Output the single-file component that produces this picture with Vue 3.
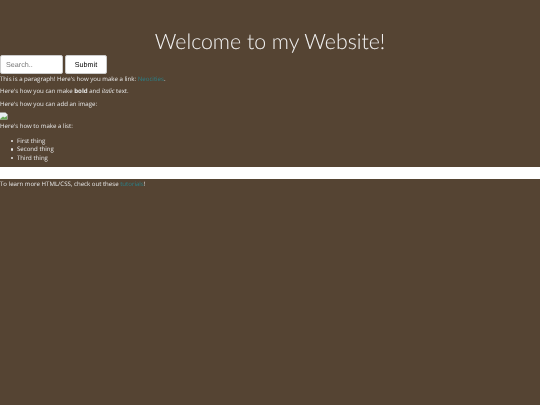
<template>
  <div class="page">
    <h1 class="title">Welcome to my Website!</h1>
    <form class="search" @submit.prevent>
      <input class="search-input" type="text" placeholder="Search.." />
      <button class="search-btn" type="submit">Submit</button>
    </form>
    <p class="first">This is a paragraph! Here's how you make a link: <a href="#">Neocities</a>.</p>
    <p>Here's how you can make <strong>bold</strong> and <em>italic</em> text.</p>
    <p>Here's how you can add an image:</p>
    <svg class="broken" width="8" height="8" viewBox="0 0 8 8">
      <path d="M0 0.5H5.5L7.5 2.5V7.5H0Z" fill="#e8eef2" />
      <path d="M0.5 6.5L3 4.5L4.5 5.5L7 4V7.5H0.5Z" fill="#6aa85a" />
    </svg>
    <p class="after-img">Here's how to make a list:</p>
    <ul class="list">
      <li v-for="item in items" :key="item">{{ item }}</li>
    </ul>
    <div class="bar"></div>
    <p class="last">To learn more HTML/CSS, check out these <a href="#">tutorials</a>!</p>
  </div>
</template>

<script setup>
const items = ['First thing', 'Second thing', 'Third thing']
</script>

<style>
html, body {
  background: #554433;
}
</style>

<style scoped>
.page {
  min-height: 405px;
  color: #e6e6e6;
  font-family: 'Open Sans', sans-serif;
  font-size: 6.1px;
  line-height: 8.5px;
  text-rendering: geometricPrecision;
  will-change: transform;
}
.title {
  margin: 0;
  padding: 27px 0 0;
  font-family: Lato, sans-serif;
  font-size: 21.3px;
  line-height: 28px;
  font-weight: 300;
  text-align: center;
  color: #f2f2f2;
}
.search {
  display: flex;
  gap: 2px;
}
.search-input {
  width: 63px;
  height: 19px;
  box-sizing: border-box;
  padding: 0 5px;
  border: 1px solid #ccc;
  border-radius: 2px;
  background: #fff;
  font-family: 'Liberation Sans', sans-serif;
  font-size: 7.2px;
  text-rendering: geometricPrecision;
}
.search-input::placeholder {
  color: #777;
}
.search-btn {
  width: 42px;
  height: 19px;
  padding: 0;
  border: 1px solid #ccc;
  border-radius: 2px;
  background: #fff;
  color: #000;
  font-family: 'Liberation Sans', sans-serif;
  font-size: 7.2px;
  text-rendering: geometricPrecision;
}
p {
  margin: 4px 0;
}
p.first {
  margin-top: 0.5px;
}
p.after-img {
  margin: 2px 0 6px;
}
a {
  color: #2a8088;
  text-decoration: none;
}
.broken {
  display: block;
}
.list {
  margin: 0 0 4.5px;
  padding-left: 17px;
  list-style: none;
}
.list li {
  position: relative;
}
.list li::before {
  content: '';
  position: absolute;
  left: -6.5px;
  top: 3px;
  width: 2.5px;
  height: 2.5px;
  border-radius: 50%;
  background: #e6e6e6;
}
.bar {
  height: 12px;
  background: #fff;
}
p.last {
  margin: 1.5px 0 0;
}
</style>
